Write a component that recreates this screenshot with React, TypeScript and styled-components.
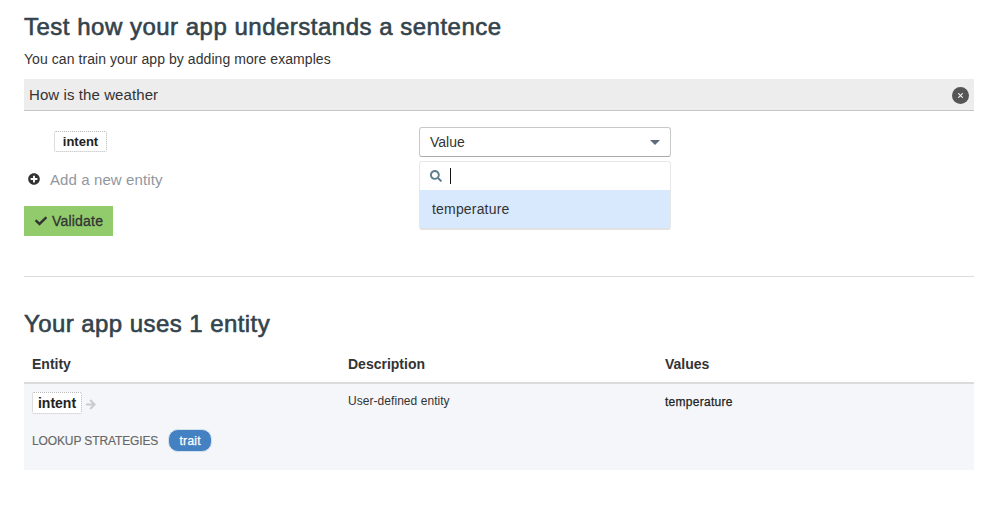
import React from "react";
import styled, { createGlobalStyle } from "styled-components";
import { FaCheck, FaPlusCircle, FaSearch } from "react-icons/fa";

const GlobalStyle = createGlobalStyle`
  *, *::before, *::after { box-sizing: border-box; }
  body {
    margin: 0;
    background: #fff;
    color: #333;
    font-family: "Liberation Sans", Arial, sans-serif;
    font-size: 14px;
  }
`;

const Page = styled.main`
  padding: 12px 34px 0 24px;
  white-space: nowrap;
`;

const Title = styled.h2<{ $spacing: string }>`
  margin: 0;
  height: 30px;
  line-height: 30px;
  font-size: 24px;
  font-weight: 400;
  color: #33434c;
  letter-spacing: ${(p) => p.$spacing};
  -webkit-text-stroke: 0.6px #33434c;
`;

const Lead = styled.p`
  margin: 7px 0 10px;
  height: 20px;
  line-height: 20px;
  letter-spacing: 0.065px;
`;

const Sentence = styled.div`
  display: flex;
  align-items: center;
  justify-content: space-between;
  height: 32px;
  padding: 0 5px;
  background: #ededed;
  border-bottom: 1px solid #c6c6c6;
  font-size: 15px;
  letter-spacing: 0.09px;
`;

const ClearButton = styled.button`
  display: flex;
  align-items: center;
  justify-content: center;
  width: 17px;
  height: 17px;
  margin-top: 1px;
  padding: 0;
  border: 0;
  border-radius: 50%;
  background: #555;
`;

const EntityRow = styled.div`
  display: grid;
  grid-template-columns: 365px 252px;
  padding: 0 0 0 30px;
  margin-top: 16px;
  height: 30px;
  align-items: start;
`;

const EntityTag = styled.span<{ $size: number; $width: number; $height: number }>`
  display: flex;
  align-items: center;
  justify-content: center;
  width: ${(p) => p.$width}px;
  height: ${(p) => p.$height}px;
  border: 1px dotted #b9b9b9;
  border-radius: 2px;
  background: #fff;
  color: #222;
  font-size: ${(p) => p.$size}px;
  font-weight: 700;
`;

const TagCell = styled.div`
  padding-top: 4px;
`;

const SelectWrap = styled.div`
  position: relative;
  width: 252px;
`;

const Select = styled.div`
  display: flex;
  align-items: center;
  justify-content: space-between;
  height: 30px;
  padding: 0 10px;
  border: 1px solid #c8c8c8;
  border-bottom-color: #aaa;
  border-radius: 3px;
`;

const Caret = styled.span`
  border: 5px solid transparent;
  border-top-color: #5f6b7c;
  border-bottom: 0;
`;

const Menu = styled.div`
  position: absolute;
  top: 34px;
  left: 0;
  width: 252px;
  height: 69px;
  border: 1px solid #e8e8e8;
  border-bottom: 2px solid #e2e2e2;
  border-radius: 3px;
  background: #fff;
`;

const Search = styled.div`
  display: flex;
  align-items: center;
  height: 28px;
  padding-left: 10px;
  color: #5f7f8f;
`;

const Cursor = styled.span`
  width: 1px;
  height: 16px;
  margin-left: 8px;
  background: #111;
`;

const Option = styled.div`
  height: 38px;
  line-height: 38px;
  padding-left: 12px;
  background: #d8e9fd;
  letter-spacing: 0.18px;
`;

const AddEntity = styled.div`
  display: flex;
  align-items: center;
  height: 24px;
  margin-top: 10px;
  padding-left: 4px;
  gap: 10px;
  font-size: 15px;
  letter-spacing: 0.1px;
  color: #9197a0;

  svg { color: #333; }
`;

const ValidateButton = styled.button`
  display: flex;
  align-items: center;
  width: 89px;
  height: 30px;
  margin-top: 15px;
  padding: 0 0 0 11px;
  gap: 5px;
  border: 0;
  background: #91cb6c;
  color: #333;
  font: 14px "Liberation Sans", Arial, sans-serif;
  letter-spacing: 0.2px;
  -webkit-text-stroke: 0.3px #333;
`;

const Divider = styled.hr`
  margin: 40px 0 32px;
  border: 0;
  border-top: 1px solid #dcdcdc;
`;

const Columns = styled.div`
  display: grid;
  grid-template-columns: 316px 317px 1fr;
  padding-left: 8px;
`;

const TableHead = styled(Columns)`
  height: 45px;
  padding-top: 15px;
  line-height: 20px;
  border-bottom: 2px solid #d9dbdc;
  font-weight: 700;
`;

const TableRow = styled(Columns)`
  height: 86px;
  padding-top: 8px;
  background: #f5f6f9;
`;

const Name = styled.div`
  display: flex;
  align-items: center;
  gap: 4px;
  height: 22px;
`;

const Arrow = styled.svg`
  margin-top: 2px;
  fill: none;
  stroke: #cbcbcb;
  stroke-width: 2;
`;

const Strategies = styled.div`
  display: flex;
  align-items: center;
  gap: 10px;
  margin-top: 15px;
  height: 23px;
  font-size: 12px;
  letter-spacing: -0.12px;
  color: #666;
  -webkit-text-stroke: 0.15px #666;
`;

const Badge = styled.span`
  display: flex;
  align-items: center;
  justify-content: center;
  width: 44px;
  height: 23px;
  border: 1px solid #d3e0ee;
  border-radius: 10px;
  background: #4481c3;
  color: #fff;
  letter-spacing: 0.3px;
  -webkit-text-stroke: 0.25px #fff;
`;

const Description = styled.div`
  font-size: 12px;
  line-height: 18px;
  letter-spacing: 0.05px;
`;

const Value = styled.div`
  margin-top: 1px;
  font-size: 12px;
  line-height: 18px;
  letter-spacing: 0.28px;
  color: #222;
  -webkit-text-stroke: 0.25px #222;
`;

export default function App() {
  return (
    <Page>
      <GlobalStyle />
      <Title $spacing="0.5px">Test how your app understands a sentence</Title>
      <Lead>You can train your app by adding more examples</Lead>
      <Sentence>
        <span>How is the weather</span>
        <ClearButton aria-label="Clear">
          <svg width="5" height="5" viewBox="0 0 5 5">
            <path d="M0.2 0.2L4.8 4.8M4.8 0.2L0.2 4.8" stroke="#f2f2f2" strokeWidth="1.1" />
          </svg>
        </ClearButton>
      </Sentence>
      <EntityRow>
        <TagCell>
          <EntityTag $size={13} $width={53} $height={21}>intent</EntityTag>
        </TagCell>
        <SelectWrap>
          <Select>
            <span>Value</span>
            <Caret />
          </Select>
          <Menu>
            <Search>
              <FaSearch size={12} />
              <Cursor />
            </Search>
            <Option>temperature</Option>
          </Menu>
        </SelectWrap>
      </EntityRow>
      <AddEntity>
        <FaPlusCircle size={12} />
        <span>Add a new entity</span>
      </AddEntity>
      <ValidateButton>
        <FaCheck size={12} />
        <span>Validate</span>
      </ValidateButton>
      <Divider />
      <Title $spacing="0.43px">Your app uses 1 entity</Title>
      <TableHead>
        <span>Entity</span>
        <span>Description</span>
        <span>Values</span>
      </TableHead>
      <TableRow>
        <div>
          <Name>
            <EntityTag $size={14} $width={50} $height={22}>intent</EntityTag>
            <Arrow width="10" height="11" viewBox="0 0 10 11">
              <path d="M0 5.5H8.3M4.2 1L8.6 5.5L4.2 10" />
            </Arrow>
          </Name>
          <Strategies>
            <span>LOOKUP STRATEGIES</span>
            <Badge>trait</Badge>
          </Strategies>
        </div>
        <Description>User-defined entity</Description>
        <Value>temperature</Value>
      </TableRow>
    </Page>
  );
}
